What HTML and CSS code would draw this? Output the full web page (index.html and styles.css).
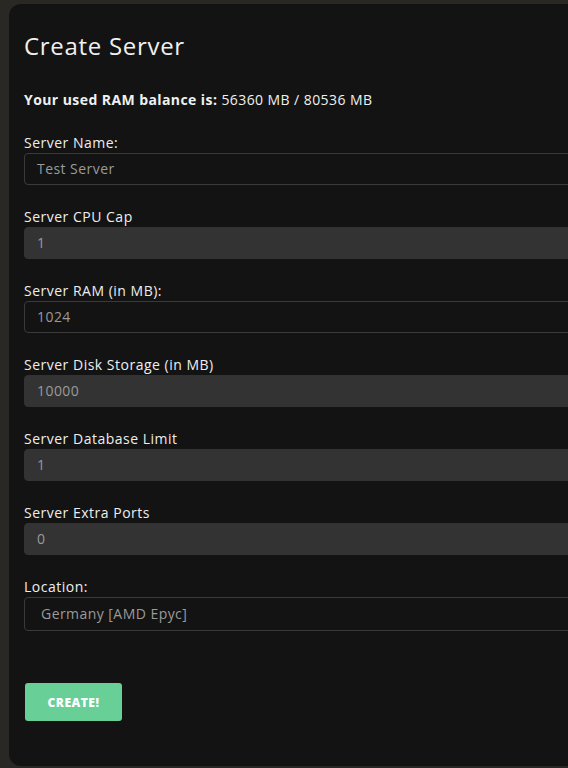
FILE: index.html
```html
<!DOCTYPE html>
<html>
<head>
<meta charset="utf-8">
<link rel="stylesheet" href="styles.css">
</head>
<body>
<div class="card">
  <h1 class="title">Create Server</h1>
  <p class="balance"><strong>Your used RAM balance is:</strong> 56360 MB / 80536 MB</p>
  <div class="group">
    <label class="label">Server Name:</label>
    <div class="field outline">Test Server</div>
  </div>
  <div class="group">
    <label class="label">Server CPU Cap</label>
    <div class="field filled">1</div>
  </div>
  <div class="group">
    <label class="label">Server RAM (in MB):</label>
    <div class="field outline">1024</div>
  </div>
  <div class="group">
    <label class="label">Server Disk Storage (in MB)</label>
    <div class="field filled">10000</div>
  </div>
  <div class="group">
    <label class="label">Server Database Limit</label>
    <div class="field filled">1</div>
  </div>
  <div class="group">
    <label class="label">Server Extra Ports</label>
    <div class="field filled">0</div>
  </div>
  <div class="group last">
    <label class="label">Location:</label>
    <div class="field outline select">Germany [AMD Epyc]</div>
  </div>
  <button class="create">CREATE!</button>
</div>
</body>
</html>
```
FILE: styles.css
```css
html, body {
  margin: 0;
  padding: 0;
  overflow: hidden;
  height: 768px;
}
body {
  background: #2a2825;
  font-family: "Open Sans", "Noto Sans", sans-serif;
  color: #f2f2f2;
}
.card {
  margin: 4px 0 0 9px;
  width: 700px;
  height: 762px;
  box-sizing: border-box;
  background: #131313;
  border-radius: 12px;
  padding: 27px 0 0 15px;
}
.title {
  margin: 0;
  font-size: 24px;
  font-weight: 400;
  line-height: 29px;
  letter-spacing: 0.7px;
  color: #f0f0f0;
}
.balance {
  margin: 30px 0 22px;
  font-size: 14px;
  line-height: 20px;
  letter-spacing: 0.42px;
  color: #f0f0f0;
}
.balance strong {
  font-weight: 700;
}
.group {
  margin-bottom: 21px;
}
.label {
  display: block;
  font-size: 14px;
  line-height: 21px;
  letter-spacing: 0.5px;
  color: #eeeeee;
}
.field {
  height: 32px;
  box-sizing: border-box;
  border-radius: 4px;
  padding-left: 12px;
  font-size: 14px;
  line-height: 30px;
  letter-spacing: 0.45px;
  color: #9a9a9a;
  border: 1px solid #333333;
}
.outline {
  background: #131313;
  border-color: #3a3a3a;
}
.filled {
  background: #333333;
}
.select {
  height: 34px;
  line-height: 32px;
  padding-left: 16px;
}
.group.last {
  margin-bottom: 52px;
}
.create {
  display: block;
  margin-left: 1px;
  width: 97px;
  height: 38px;
  border: none;
  border-radius: 3px;
  background: #68cf97;
  color: #ffffff;
  font-family: "Open Sans", "Noto Sans", sans-serif;
  font-weight: 800;
  font-size: 12px;
  letter-spacing: 0.5px;
  padding: 0;
}
```
